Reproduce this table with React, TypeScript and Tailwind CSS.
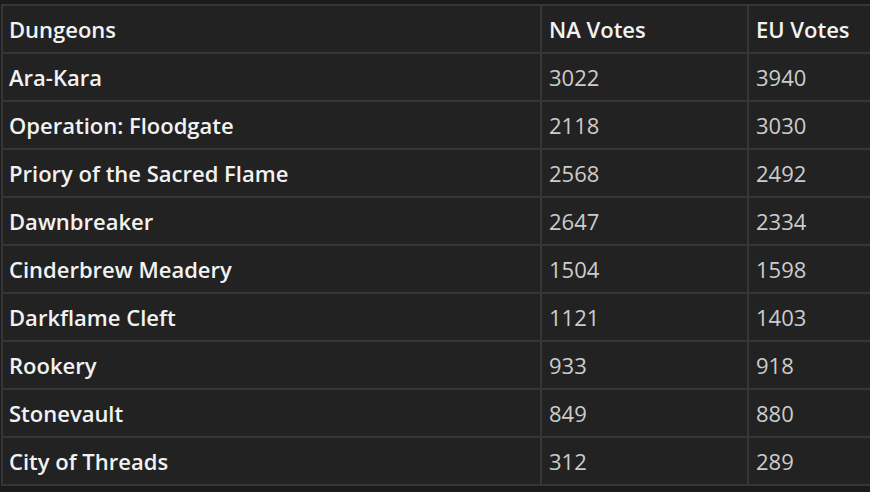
import React from "react";

const rows: [string, number, number][] = [
  ["Ara-Kara", 3022, 3940],
  ["Operation: Floodgate", 2118, 3030],
  ["Priory of the Sacred Flame", 2568, 2492],
  ["Dawnbreaker", 2647, 2334],
  ["Cinderbrew Meadery", 1504, 1598],
  ["Darkflame Cleft", 1121, 1403],
  ["Rookery", 933, 918],
  ["Stonevault", 849, 880],
  ["City of Threads", 312, 289],
];

const App: React.FC = () => {
  return (
    <div
      className="w-[870px] h-[492px] overflow-hidden bg-[#1b1b1b] pt-[4px] pl-[1px]"
      style={{ fontFamily: '"Open Sans", "Liberation Sans", sans-serif' }}
    >
      <table className="table-fixed w-[886px] border-separate border-spacing-[2px] bg-[#363636] text-[22px] leading-none">
        <colgroup>
          <col className="w-[537px]" />
          <col className="w-[205px]" />
          <col />
        </colgroup>
        <thead>
          <tr className="h-[46px]">
            <th className="bg-[#222222] px-[6px] text-left font-semibold text-[#f2f2f2]">Dungeons</th>
            <th className="bg-[#222222] px-[7px] text-left font-semibold text-[#f2f2f2]">NA Votes</th>
            <th className="bg-[#222222] px-[7px] text-left font-semibold text-[#f2f2f2]">EU Votes</th>
          </tr>
        </thead>
        <tbody>
          {rows.map(([name, na, eu]) => (
            <tr key={name} className="h-[46px]">
              <td className="bg-[#222222] px-[6px] font-semibold text-[#f2f2f2]">{name}</td>
              <td className="bg-[#222222] px-[7px] text-[#cccccc]">{na}</td>
              <td className="bg-[#222222] px-[7px] text-[#cccccc]">{eu}</td>
            </tr>
          ))}
        </tbody>
      </table>
    </div>
  );
};

export default App;
